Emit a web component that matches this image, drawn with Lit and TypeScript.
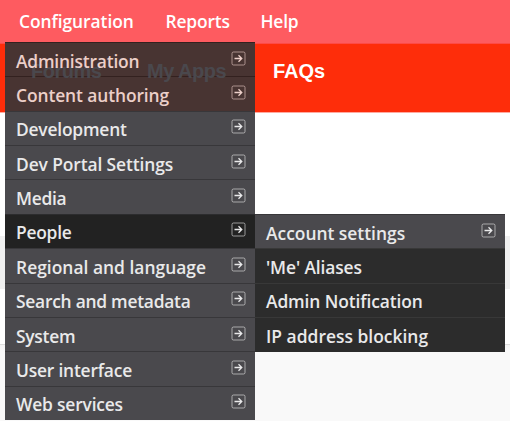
import { LitElement, html, css, svg } from "lit";
import { customElement } from "lit/decorators.js";

interface Entry { label: string; spacing: number; arrow?: boolean; active?: boolean; dark?: boolean; over?: boolean }

const topItems = [
  { label: "Configuration", width: 146.5, spacing: -0.06 },
  { label: "Reports", width: 95, spacing: -0.15 },
  { label: "Help", width: 60, spacing: -0.2 },
];
const main: Entry[] = [
  { label: "Administration", spacing: -0.19, arrow: true, over: true },
  { label: "Content authoring", spacing: -0.1, arrow: true, over: true },
  { label: "Development", spacing: -0.2, arrow: true },
  { label: "Dev Portal Settings", spacing: -0.1, arrow: true },
  { label: "Media", spacing: -0.3, arrow: true },
  { label: "People", spacing: -0.25, arrow: true, active: true },
  { label: "Regional and language", spacing: 0.02, arrow: true },
  { label: "Search and metadata", spacing: -0.25, arrow: true },
  { label: "System", spacing: -0.25, arrow: true },
  { label: "User interface", spacing: -0.2, arrow: true },
  { label: "Web services", spacing: -0.18, arrow: true },
];
const sub: Entry[] = [
  { label: "Account settings", spacing: 0, arrow: true },
  { label: "'Me' Aliases", spacing: -0.12, dark: true },
  { label: "Admin Notification", spacing: -0.1, dark: true },
  { label: "IP address blocking", spacing: 0.02, dark: true },
];

@customElement("app-root")
export class AppRoot extends LitElement {
  static styles = css`
    :host { display: block; position: relative; width: 510px; height: 424px; overflow: hidden; background: #fff; font: 600 17.4px/34px "Open Sans", "Noto Sans", sans-serif; color: #e9e9ea; }
    .top { display: flex; height: 44px; box-sizing: border-box; padding-left: 19px; background: #fe5b60; border-bottom: 1px solid #fe4a46; color: #fff; }
    .top span { line-height: 43px; white-space: nowrap; }
    .nav { display: flex; height: 68px; background: #fe2d0a; color: #fff; font: bold 20px/55px "Liberation Sans", Arial, sans-serif; padding-left: 31px; }
    .nav span, .ghost span { white-space: nowrap; }
    .forums { width: 116px; }
    .apps { width: 126px; }
    .gap { height: 124px; border-top: 1px solid #ffaaa0; box-sizing: border-box; }
    .band { height: 53px; background: #f0f0f0; }
    .blank { height: 55px; }
    .foot { height: 78px; box-sizing: border-box; background: linear-gradient(#f3f3f3, #f9f9f9 6px); border-top: 1px solid #ddd; border-bottom: 1px solid #fff; }
    .menu { position: absolute; width: 250px; display: flex; flex-direction: column; box-sizing: border-box; }
    .main { left: 5px; top: 42px; height: 378px; }
    .sub { left: 255px; top: 214px; height: 137.5px; }
    .row { display: flex; box-sizing: border-box; flex: 1; min-height: 0; align-items: center; justify-content: space-between; background: #4a494d; border-top: 1px solid #38373a; padding: 2px 9px 0 11px; }
    .over { background: #483432; border-color: #33211f; color: #eccfc9; }
    .active { background: #222; border-color: #2c2c2e; }
    .dark { background: #2c2c2c; border-color: #383838; }
    .label { position: relative; z-index: 2; white-space: nowrap; }
    .arrow { width: 15px; height: 15px; margin-top: -5px; flex: none; }
    .ghost { position: absolute; z-index: 1; left: 31px; top: 44px; display: flex; color: #4a484d; font: bold 20px/55px "Liberation Sans", Arial, sans-serif; letter-spacing: -.5px; }
  `;

  private arrow() {
    return html`<svg class="arrow" viewBox="0 0 15 15" fill="none">${svg`<rect x="1" y="1" width="13" height="13" rx="1.5" stroke="currentColor" stroke-opacity=".6"/><path d="M3.5 7.5H10.5M7.5 4.2L10.8 7.5L7.5 10.8" stroke="currentColor" stroke-width="1.3"/>`}</svg>`;
  }

  private row(e: Entry) {
    return html`<div class="row ${e.over ? "over" : ""} ${e.active ? "active" : ""} ${e.dark ? "dark" : ""}"><span class="label" style="letter-spacing:${e.spacing}px">${e.label}</span>${e.arrow ? this.arrow() : ""}</div>`;
  }

  render() {
    return html`
      <header class="top">${topItems.map((t) => html`<span style="width:${t.width}px;letter-spacing:${t.spacing}px">${t.label}</span>`)}</header>
      <nav class="nav"><span class="forums"></span><span class="apps"></span><span>FAQs</span></nav>
      <div class="gap"></div><div class="band"></div><div class="blank"></div><div class="foot"></div>
      <div class="menu main">${main.map((e) => this.row(e))}</div>
      <div class="menu sub">${sub.map((e) => this.row(e))}</div>
      <div class="ghost"><span class="forums">Forums</span><span class="apps">My Apps</span></div>
    `;
  }
}
